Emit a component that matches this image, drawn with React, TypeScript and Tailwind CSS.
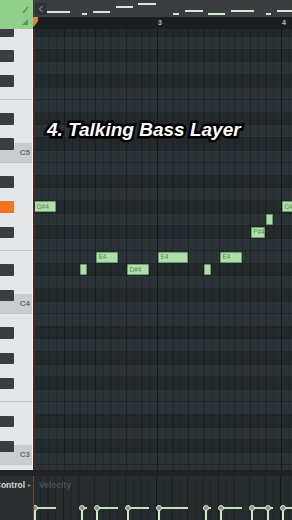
import clsx from "clsx";

const STEP = 7.75;
const TOP_NOTE = 82;
const BOTTOM_NOTE = 45;
const NAMES = ["C", "C#", "D", "D#", "E", "F", "F#", "G", "G#", "A", "A#", "B"];

const isBlack = (m: number) => [1, 3, 6, 8, 10].includes(m % 12);
const noteName = (m: number) => NAMES[m % 12] + (Math.floor(m / 12) - 1);

type Note = { pitch: number; start: number; len: number; label?: boolean };

const NOTES: Note[] = [
  { pitch: 68, start: 0, len: 3, label: true },
  { pitch: 63, start: 6, len: 1 },
  { pitch: 64, start: 8, len: 3, label: true },
  { pitch: 63, start: 12, len: 3, label: true },
  { pitch: 64, start: 16, len: 4, label: true },
  { pitch: 63, start: 22, len: 1 },
  { pitch: 64, start: 24, len: 3, label: true },
  { pitch: 66, start: 28, len: 2, label: true },
  { pitch: 67, start: 30, len: 1 },
  { pitch: 68, start: 32, len: 3, label: true },
];

// mini preview in the top bar: [x, y, width]
const PREVIEW = [
  [14, 11, 23],
  [49, 13, 5],
  [60, 11, 17],
  [83, 6, 17],
  [105, 3, 18],
  [140, 13, 6],
  [152, 10, 18],
  [175, 13, 17],
  [198, 10, 23],
  [233, 13, 5],
  [244, 10, 16],
];

const pitches = Array.from(
  { length: TOP_NOTE - BOTTOM_NOTE + 1 },
  (_, i) => TOP_NOTE - i
);

const KeyRow = ({ pitch }: { pitch: number }) => {
  const pc = pitch % 12;
  return (
    <div
      className={clsx(
        "relative h-[12.6px] shrink-0",
        (pc === 0 || pc === 5) && "border-b border-[#c2c5c8]"
      )}
    >
      {pc === 0 && (
        <div className="absolute bottom-0 left-0 right-0 flex h-[19px] items-center justify-end bg-[#caccd0] pr-[2px] text-[8px] font-bold leading-none text-[#676b70]">
          {noteName(pitch)}
        </div>
      )}
      {isBlack(pitch) && (
        <div
          className={clsx(
            "relative z-10 mt-[0.5px] h-[11.6px] w-[14px] rounded-r-[1px]",
            pitch === 68 ? "bg-[#ee7420]" : "bg-[#3a3d40]"
          )}
        />
      )}
    </div>
  );
};

const GridRow = ({ pitch }: { pitch: number }) => (
  <div
    className={clsx(
      "relative h-[12.6px] shrink-0 border-b border-[#20262a]",
      isBlack(pitch) ? "bg-[#24292c]" : "bg-[#2c3336]"
    )}
  >
    {NOTES.filter((n) => n.pitch === pitch).map((n, i) => (
      <div
        key={i}
        className="absolute top-[0.5px] z-20 flex h-[11px] items-center overflow-hidden rounded-[1px] border border-[#6e9c6b] bg-[#aedea9] pl-[2px] text-[6.5px] leading-none text-[#5a8756]"
        style={{ left: n.start * STEP - 1.5, width: n.len * STEP - 1 }}
      >
        {n.label ? noteName(n.pitch) : null}
      </div>
    ))}
  </div>
);

// vertical step / beat / bar lines
const GridLines = () => (
  <>
    <div className="pointer-events-none absolute inset-y-0 left-[-2px] right-0 z-10 bg-[repeating-linear-gradient(90deg,rgba(0,0,0,0.14)_0px,rgba(0,0,0,0.14)_1px,transparent_1px,transparent_7.75px)]" />
    <div className="pointer-events-none absolute inset-y-0 left-[-2px] right-0 z-10 bg-[repeating-linear-gradient(90deg,rgba(0,0,0,0.18)_0px,rgba(0,0,0,0.18)_1px,transparent_1px,transparent_31px)]" />
    <div className="pointer-events-none absolute inset-y-0 left-[-2px] right-0 z-10 bg-[repeating-linear-gradient(90deg,rgba(0,0,0,0.25)_0px,rgba(0,0,0,0.25)_1px,transparent_1px,transparent_124px)]" />
  </>
);

export default function App() {
  return (
    <div className="relative flex h-[520px] w-[292px] flex-col overflow-hidden bg-[#2a3033] font-['Liberation_Sans',Arial,sans-serif]">
      {/* Header */}
      <div className="flex h-[29px] shrink-0">
        <div className="w-[33px] shrink-0 bg-[#8fcf8b]">
          <svg width="33" height="29" viewBox="0 0 33 29">
            <path d="M23 13 L28 7" stroke="#5c9658" strokeWidth="1.6" />
            <polygon points="22,25 28,25 28,19" fill="#5c9658" />
          </svg>
        </div>
        <div className="flex flex-1 flex-col">
          <div className="relative h-[17px] bg-[#3a3e41]">
            <div className="absolute left-[2px] top-[3px] flex h-[12px] w-[12px] items-center justify-center rounded-[2px] bg-[#2f3336]">
              <svg width="6" height="8" viewBox="0 0 6 8">
                <path d="M4.5 1 L1.5 4 L4.5 7" stroke="#767b7f" strokeWidth="1.2" fill="none" />
              </svg>
            </div>
            {PREVIEW.map(([x, y, w], i) => (
              <div
                key={i}
                className="absolute h-[2px] bg-[#d7e6da]"
                style={{ left: x, top: y, width: w }}
              />
            ))}
          </div>
          <div className="relative flex h-[12px] bg-[#1b1e20] text-[7px] font-bold leading-[12px] text-[#b7bcbf]">
            <svg
              className="absolute left-0 top-0"
              width="6"
              height="10"
              viewBox="0 0 6 10"
            >
              <polygon points="0,0 5,0 5,4 1,9.5 0,9.5" fill="#d68943" />
            </svg>
            <div className="w-[124px] shrink-0" />
            <div className="w-[124px] shrink-0 pl-[1px]">3</div>
            <div className="w-[124px] shrink-0 pl-[1px]">4</div>
          </div>
        </div>
      </div>

      {/* Piano roll */}
      <div className="flex h-[441px] shrink-0">
        <div className="w-[33px] shrink-0 overflow-hidden border-r border-[#f2f3f4] bg-[#e3e5e7]">
          <div className="mt-[-4.4px] flex flex-col">
            {pitches.map((p) => (
              <KeyRow key={p} pitch={p} />
            ))}
          </div>
        </div>
        <div className="w-[2px] shrink-0 bg-[#4a2820]" />
        <div className="relative flex-1 overflow-hidden">
          <div className="mt-[-4.4px] flex flex-col">
            {pitches.map((p) => (
              <GridRow key={p} pitch={p} />
            ))}
          </div>
          <GridLines />
        </div>
      </div>

      <div className="h-[6px] shrink-0 bg-[#1f2326]" />

      {/* Event editor */}
      <div className="flex flex-1">
        <div className="flex w-[33px] shrink-0 items-start bg-[#2b2f32] pt-[4px]">
          <div className="flex h-[10px] flex-1 justify-end overflow-hidden pr-[3px]">
            <span className="whitespace-nowrap text-[8.5px] font-bold leading-[10px] text-[#d4d7d9]">
              Control
            </span>
          </div>
          <span className="pr-[2px] text-[6px] leading-[10px] text-[#8a8f93]">
            ▸
          </span>
        </div>
        <div className="w-px shrink-0 bg-[#6a4636]" />
        <div className="relative flex-1 overflow-hidden bg-[#262b2e]">
          <GridLines />
          <div className="pl-[5px] pt-[4px] text-[8.5px] font-bold leading-[10px] text-[#4a5256]">
            Velocity
          </div>
          {NOTES.map((n, i) => (
            <div
              key={i}
              className="absolute bottom-0 z-20 h-[13px]"
              style={{ left: n.start * STEP, width: n.len * STEP - 1 }}
            >
              <div className="absolute left-0 top-0 h-full w-[2px] bg-[#cfe8cb]" />
              <div className="absolute left-0 top-0 h-[2px] w-full bg-[#c6e2c2]" />
              <div className="absolute left-[-2px] top-[-2px] h-[6px] w-[6px] rounded-full border border-[#d3eacf] bg-[#7f9a82]" />
            </div>
          ))}
        </div>
      </div>

      {/* Title overlay */}
      <div className="absolute left-[47px] top-[120px] z-30 whitespace-nowrap text-[19px] font-bold italic leading-none text-white [-webkit-text-stroke:5px_#000] [paint-order:stroke_fill]">
        4. Talking Bass Layer
      </div>
    </div>
  );
}
